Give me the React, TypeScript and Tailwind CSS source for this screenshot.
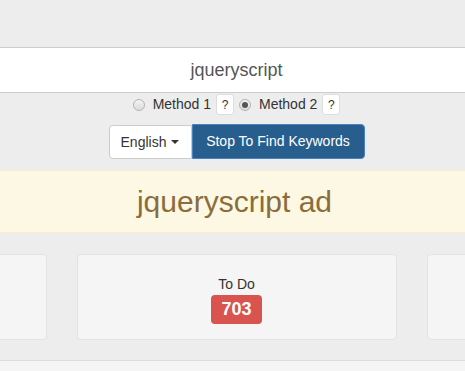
const FONT = "font-['Liberation_Sans',Arial,sans-serif]"

function Radio({ checked }: { checked?: boolean }) {
  return (
    <span className="flex h-[12px] w-[12px] shrink-0 items-center justify-center rounded-full border border-[#b4b4b4] bg-gradient-to-b from-[#f3f3f3] to-[#dcdcdc]">
      {checked && <span className="h-[6px] w-[6px] rounded-full bg-[#555]" />}
    </span>
  )
}

function HelpBox() {
  return (
    <span className="flex h-[21px] w-[18px] items-center justify-center rounded-[3px] border border-[#ddd] bg-white text-[12px] text-[#333]">
      ?
    </span>
  )
}

function StatCard({ label, count }: { label?: string; count?: number }) {
  return (
    <div className="flex h-[86px] w-[320px] shrink-0 flex-col items-center rounded-[4px] border border-[#e3e3e3] bg-[#f5f5f5] pt-[19px]">
      {label && (
        <>
          <span className="text-[14px] leading-[20px] text-[#333]">{label}</span>
          <span className="mt-[1px] flex h-[29px] items-center rounded-[4px] bg-[#d9534f] px-[10px] text-[18px] font-bold text-white">
            {count}
          </span>
        </>
      )}
    </div>
  )
}

export default function App() {
  return (
    <div className={`${FONT} h-[371px] w-[465px] overflow-hidden bg-[#ededed]`}>
      {/* search box */}
      <div className="mt-[47px] flex h-[46px] items-center justify-center border-y border-[#cccccc] bg-white pl-2 text-[18px] text-[#555]">
        jqueryscript
      </div>

      {/* method choice */}
      <div className="mt-[1px] flex h-[21px] items-center justify-center pl-2 text-[14px] text-[#333]">
        <Radio />
        <span className="ml-[8px]">Method 1</span>
        <span className="ml-[5px]"><HelpBox /></span>
        <span className="ml-[5px]"><Radio checked /></span>
        <span className="ml-[8px]">Method 2</span>
        <span className="ml-[5px]"><HelpBox /></span>
      </div>

      {/* actions */}
      <div className="mt-[9px] flex justify-center pl-2">
        <button className="mt-[1px] flex h-[34px] w-[83px] items-center justify-center gap-[5px] rounded-l-[4px] border border-[#ccc] bg-white text-[14px] text-[#333]">
          English
          <svg width="8" height="4" viewBox="0 0 8 4" aria-hidden="true">
            <path d="M0 0h8L4 4z" fill="#333" />
          </svg>
        </button>
        <button className="flex h-[35px] w-[173px] items-center justify-center rounded-r-[4px] border border-[#4b82be] bg-[#285e8e] text-[14px] text-white">
          Stop To Find Keywords
        </button>
      </div>

      {/* ad */}
      <div className="mt-[11px] flex h-[63px] items-center justify-center border-y border-[#faebcc] bg-[#fcf8e3] pl-1 text-[30px] text-[#8a6d3b]">
        jqueryscript ad
      </div>

      {/* stats */}
      <div className="mt-[21px] flex justify-center gap-[30px] overflow-hidden pl-2">
        <StatCard />
        <StatCard label="To Do" count={703} />
        <StatCard />
      </div>

      <div className="mt-[20px] h-[20px] border-t border-[#dddddd] bg-[#f5f5f5]" />
    </div>
  )
}
